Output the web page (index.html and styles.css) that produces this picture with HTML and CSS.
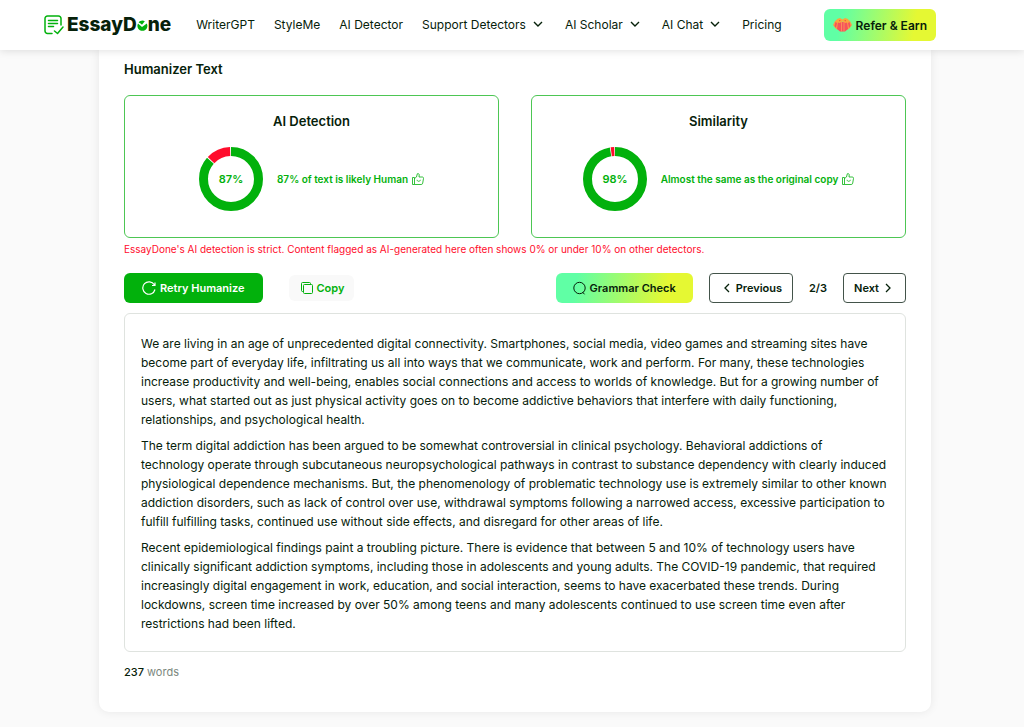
FILE: index.html
```html
<!DOCTYPE html>
<html lang="en">
<head>
  <meta charset="UTF-8" />
  <meta name="viewport" content="width=device-width, initial-scale=1.0"/>
  <title>EssayDone - Humanizer</title>
  <link rel="stylesheet" href="styles.css">
</head>
<body>

  <header class="header">
    <a class="logo" href="#" aria-label="EssayDone">
      <svg class="logo-icon" width="20" height="20" viewBox="0 0 20 20" fill="none" stroke="#02b10c" stroke-width="1.5" stroke-linecap="round" stroke-linejoin="round">
        <path d="M8 18.5H3.5A2.5 2.5 0 0 1 1 16V3.5A2.5 2.5 0 0 1 3.5 1h11A2.5 2.5 0 0 1 17 3.5V10"/>
        <path d="M4.5 5.5h9M4.5 8.5h9M4.5 11.5h5"/>
        <path d="M10.5 16l3 2.5 5.5-6.500"/>
      </svg>
      <span class="logo-text">EssayD<svg class="logo-o" width="11" height="11" viewBox="0 0 11 11">
        <path d="M9.8 3.5A5 5 0 1 1 1 3.500L5 7z" fill="#02b10c"/>
        <path d="M1.600 2.500C3 .6 5.800 0 7.800 1.200L5 4.800 3.200 3.200z" fill="#02b10c"/>
      </svg>ne</span>
    </a>
    <nav class="nav">
      <a href="#">WriterGPT</a>
      <a href="#">StyleMe</a>
      <a href="#">AI Detector</a>
      <a href="#">Support Detectors <svg class="chevron" width="10" height="6" viewBox="0 0 10 6"><path d="M1 1l4 4 4-4"/></svg></a>
      <a href="#">AI Scholar <svg class="chevron" width="10" height="6" viewBox="0 0 10 6"><path d="M1 1l4 4 4-4"/></svg></a>
      <a href="#">AI Chat <svg class="chevron" width="10" height="6" viewBox="0 0 10 6"><path d="M1 1l4 4 4-4"/></svg></a>
      <a href="#">Pricing</a>
    </nav>
    <button class="btn refer">
      <svg width="19" height="16" viewBox="0 0 19 16">
        <path d="M0 8l2-4 3-2 1 11-3-1zM19 8l-2-4-3-2-1 11 3-1z" fill="#fb9b48"/>
        <path d="M2.500 5l1.500 1-1 5-1.500-2zM16.500 5L15 6l1 5 1.500-2z" fill="#f5535b"/>
        <path d="M5 5h9l1 7-3 2.500H7L4 12z" fill="#f5535b"/>
        <path d="M8 5h1v9.500H8zM10.500 5h1v9.500h-1z" fill="#fb8a5b"/>
        <path d="M9.500 2.500L7 1 4 2 3 5l3.500 1 3-1.500 3 1.500L16 5l-1-3-3-1z" fill="#fba63c"/>
        <path d="M6 3l2 .5-2 1zM13 3l-2 .5 2 1z" fill="#ee5b3f"/>
      </svg>
      Refer &amp; Earn
    </button>
  </header>

  <main class="card">
    <h1 class="title">Humanizer Text</h1>

    <div class="scores">
      <section class="score">
        <h2>AI Detection</h2>
        <div class="score-row">
          <svg class="ring" width="64" height="64" viewBox="0 0 64 64">
            <g transform="rotate(-90 32 32)">
              <circle class="ring-good" cx="32" cy="32" r="27.5" pathLength="100" stroke-dasharray="86.5 13.5"/>
              <circle class="ring-bad" cx="32" cy="32" r="27.5" pathLength="100" stroke-dasharray="12.4 87.6" stroke-dashoffset="-87.1"/>
            </g>
            <text x="32" y="36">87%</text>
          </svg>
          <p class="verdict">87% of text is likely Human
            <svg class="thumb" width="12" height="12" viewBox="0 0 12 12"><path d="M.5 4.5h2v7h-2zM2.5 5.5l2-1.5L5.3.8c.9-.6 2 .1 1.900 1.200L7 4h3.300c.8 0 1.300.6 1.200 1.400l-.8 4.800c-.1.8-.7 1.300-1.500 1.300H2.500M5 6.800c.3 2 3 2 3.500 0"/></svg>
          </p>
        </div>
      </section>
      <section class="score">
        <h2>Similarity</h2>
        <div class="score-row">
          <svg class="ring" width="64" height="64" viewBox="0 0 64 64">
            <g transform="rotate(-90 32 32)">
              <circle class="ring-good" cx="32" cy="32" r="27.5" pathLength="100" stroke-dasharray="97.4 2.6"/>
              <circle class="ring-bad" cx="32" cy="32" r="27.5" pathLength="100" stroke-dasharray="1.8 98.2" stroke-dashoffset="-97.8"/>
            </g>
            <text x="32" y="36">98%</text>
          </svg>
          <p class="verdict">Almost the same as the original copy
            <svg class="thumb" width="12" height="12" viewBox="0 0 12 12"><path d="M.5 4.5h2v7h-2zM2.5 5.5l2-1.5L5.3.8c.9-.6 2 .1 1.900 1.200L7 4h3.300c.8 0 1.300.6 1.200 1.400l-.8 4.800c-.1.8-.7 1.300-1.500 1.300H2.500M5 6.800c.3 2 3 2 3.500 0"/></svg>
          </p>
        </div>
      </section>
    </div>
    <p class="notice">EssayDone's AI detection is strict. Content flagged as AI-generated here often shows 0% or under 10% on other detectors.</p>

    <div class="toolbar">
      <button class="btn retry">
        <svg width="14" height="14" viewBox="0 0 14 14" fill="none" stroke="#fff" stroke-width="1.2"><path d="M13 8.5A6.2 6.2 0 1 1 12.3 3.8M13 1.5v3h-3"/></svg>
        Retry Humanize
      </button>
      <button class="btn copy">
        <svg width="12" height="12" viewBox="0 0 12 12" fill="none" stroke="#02b10c"><rect x="2.5" y="2.5" width="9" height="9" rx="1"/><path d="M9.5 2.5v-1a1 1 0 0 0-1-1h-7a1 1 0 0 0-1 1v7a1 1 0 0 0 1 1h1"/></svg>
        Copy
      </button>
      <div class="pager">
        <button class="btn grammar">
          <svg width="13" height="14" viewBox="0 0 13 14" fill="none" stroke="#06210a"><circle cx="6.5" cy="7" r="5.7"/><path d="M9.5 11l2 2.3"/></svg>
          Grammar Check
        </button>
        <button class="btn page-btn prev">
          <svg width="6" height="10" viewBox="0 0 6 10"><path d="M5 1L1 5l4 4"/></svg>
          Previous
        </button>
        <span class="page-count">2/3</span>
        <button class="btn page-btn next">
          Next
          <svg width="6" height="10" viewBox="0 0 6 10"><path d="M1 1l4 4-4 4"/></svg>
        </button>
      </div>
    </div>

    <article class="result">
      <p>We are living in an age of unprecedented digital connectivity. Smartphones, social media, video games and streaming sites have become part of everyday life, infiltrating us all into ways that we communicate, work and perform. For many, these technologies increase productivity and well-being, enables social connections and access to worlds of knowledge. But for a growing number of users, what started out as just physical activity goes on to become addictive behaviors that interfere with daily functioning, relationships, and psychological health.</p>
      <p>The term digital addiction has been argued to be somewhat controversial in clinical psychology. Behavioral addictions of technology operate through subcutaneous neuropsychological pathways in contrast to substance dependency with clearly induced physiological dependence mechanisms. But, the phenomenology of problematic technology use is extremely similar to other known addiction disorders, such as lack of control over use, withdrawal symptoms following a narrowed access, excessive participation to fulfill fulfilling tasks, continued use without side effects, and disregard for other areas of life.</p>
      <p>Recent epidemiological findings paint a troubling picture. There is evidence that between 5 and 10% of technology users have clinically significant addiction symptoms, including those in adolescents and young adults. The COVID-19 pandemic, that required increasingly digital engagement in work, education, and social interaction, seems to have exacerbated these trends. During lockdowns, screen time increased by over 50% among teens and many adolescents continued to use screen time even after restrictions had been lifted.</p>
    </article>
    <p class="words"><b>237</b> words</p>
  </main>

</body>
</html>
```

FILE: styles.css
```css
* {
  box-sizing: border-box;
}

body {
  margin: 0;
  background: #fafafa;
  color: #06210a;
  font-family: Inter, sans-serif;
  font-size: 12px;
}

h1, h2, p {
  margin: 0;
}

.header {
  position: sticky;
  top: 0;
  z-index: 1;
  display: flex;
  align-items: center;
  height: 50px;
  padding: 0 88px 0 44px;
  background: #fff;
  box-shadow: 0 1px 8px rgba(0,0,0,0.12);
}

.logo {
  display: flex;
  align-items: center;
  gap: 3px;
  color: #06210a;
  text-decoration: none;
}

.logo-text {
  font-size: 19px;
  font-weight: 800;
  line-height: 24px;
}

.nav {
  display: flex;
  gap: 19px;
  margin-left: 25px;
  padding-bottom: 2px;
}

.nav a {
  display: flex;
  align-items: center;
  gap: 7px;
  color: #06210a;
  text-decoration: none;
  white-space: nowrap;
}

.chevron {
  margin-right: 3px;
  fill: none;
  stroke: #06210a;
  stroke-width: 1.4;
}

.btn {
  display: flex;
  align-items: center;
  justify-content: center;
  gap: 4px;
  height: 30px;
  padding: 0 17px;
  border: none;
  border-radius: 6px;
  color: #06210a;
  font-family: inherit;
  font-size: 11px;
  font-weight: 600;
  white-space: nowrap;
  cursor: pointer;
}

.refer {
  height: 32px;
  margin-left: auto;
  padding: 0 9px;
  background: linear-gradient(100deg, #60ffa5 15%, #e5f833 80%);
  font-size: 12px;
}

.card {
  margin: 0 93px 15px 99px;
  padding: 11px 25px 32px;
  background: #fff;
  border-radius: 0 0 10px 10px;
  box-shadow: 0 0 10px rgba(0,0,0,0.08);
}

.title {
  font-size: 13px;
  font-weight: 600;
  line-height: 16px;
}

.scores {
  display: grid;
  grid-template-columns: 1fr 1fr;
  gap: 32px;
  margin-top: 18px;
}

.score {
  padding: 16px 16px 26px;
  border: 1px solid #4dc654;
  border-radius: 6px;
}

.score h2 {
  font-size: 13px;
  font-weight: 600;
  line-height: 18px;
  text-align: center;
}

.score-row {
  display: flex;
  align-items: center;
  justify-content: center;
  gap: 14px;
  margin-top: 17px;
}

.ring circle {
  fill: none;
  stroke-width: 9;
}

.ring .ring-good {
  stroke: #02b10c;
}

.ring .ring-bad {
  stroke: #ff0d2c;
}

.ring text {
  fill: #02b10c;
  font-size: 11px;
  font-weight: 600;
  text-anchor: middle;
}

.verdict {
  display: flex;
  align-items: center;
  gap: 4px;
  color: #02b10c;
  font-size: 10px;
  font-weight: 600;
}

.thumb {
  fill: none;
  stroke: #02b10c;
  stroke-width: 0.8;
}

.notice {
  margin-top: 3px;
  color: #ff0d2c;
  font-size: 10px;
  line-height: 16px;
}

.toolbar {
  display: flex;
  align-items: center;
  margin-top: 16px;
}

.retry {
  padding: 0 18px;
  background: #02b10c;
  color: #fff;
}

.copy {
  height: 26px;
  margin-left: 26px;
  padding: 0 10px 0 12px;
  background: #f9f9f9;
  color: #02b10c;
}

.pager {
  display: flex;
  align-items: center;
  gap: 16px;
  margin-left: auto;
}

.grammar {
  background: linear-gradient(100deg, #60ffa5 15%, #e5f833 80%);
}

.page-btn {
  gap: 6px;
  border: 1px solid #43544a;
  border-radius: 4px;
  background: #fff;
}

.page-btn svg {
  fill: none;
  stroke: #06210a;
  stroke-width: 1.3;
}

.prev {
  padding: 0 10px 0 14px;
}

.next {
  padding: 0 14px 0 10px;
}

.page-count {
  font-size: 11px;
  font-weight: 600;
}

.result {
  margin-top: 10px;
  padding: 20px 18px 18px 16px;
  border: 1px solid #dfe3df;
  border-radius: 6px;
  line-height: 19px;
}

.result p + p {
  margin-top: 7px;
}

.words {
  margin-top: 12px;
  color: #7c877e;
  font-size: 11px;
  line-height: 16px;
}

.words b {
  color: #06210a;
  font-weight: 500;
}
```
